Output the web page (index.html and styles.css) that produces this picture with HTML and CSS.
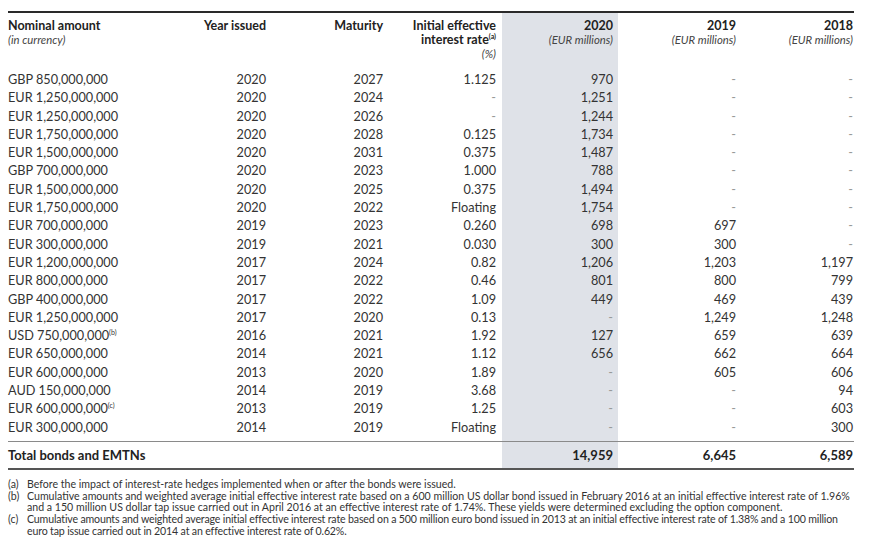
FILE: index.html
```html
<!DOCTYPE html>
<html>
<head>
<meta charset="utf-8">
<link rel="stylesheet" href="styles.css">
</head>
<body>
<div class="page">
<table class="bonds">
<colgroup>
<col class="c1"><col class="c2"><col class="c3"><col class="c4"><col class="c5"><col class="c6"><col class="c7">
</colgroup>
<thead>
<tr>
<th class="left"><b>Nominal amount</b><br><i>(in currency)</i></th>
<th><b>Year issued</b></th>
<th><b>Maturity</b></th>
<th><b>Initial effective<br>interest rate<sup>(a)</sup></b><br><i>(%)</i></th>
<th class="shade"><b>2020</b><br><i>(EUR millions)</i></th>
<th><b>2019</b><br><i>(EUR millions)</i></th>
<th><b>2018</b><br><i>(EUR millions)</i></th>
</tr>
</thead>
<tbody>
<tr><td class="left">GBP 850,000,000</td><td>2020</td><td>2027</td><td>1.125</td><td class="shade">970</td><td class="dash">-</td><td class="dash">-</td></tr>
<tr><td class="left">EUR 1,250,000,000</td><td>2020</td><td>2024</td><td class="dash">-</td><td class="shade">1,251</td><td class="dash">-</td><td class="dash">-</td></tr>
<tr><td class="left">EUR 1,250,000,000</td><td>2020</td><td>2026</td><td class="dash">-</td><td class="shade">1,244</td><td class="dash">-</td><td class="dash">-</td></tr>
<tr><td class="left">EUR 1,750,000,000</td><td>2020</td><td>2028</td><td>0.125</td><td class="shade">1,734</td><td class="dash">-</td><td class="dash">-</td></tr>
<tr><td class="left">EUR 1,500,000,000</td><td>2020</td><td>2031</td><td>0.375</td><td class="shade">1,487</td><td class="dash">-</td><td class="dash">-</td></tr>
<tr><td class="left">GBP 700,000,000</td><td>2020</td><td>2023</td><td>1.000</td><td class="shade">788</td><td class="dash">-</td><td class="dash">-</td></tr>
<tr><td class="left">EUR 1,500,000,000</td><td>2020</td><td>2025</td><td>0.375</td><td class="shade">1,494</td><td class="dash">-</td><td class="dash">-</td></tr>
<tr><td class="left">EUR 1,750,000,000</td><td>2020</td><td>2022</td><td>Floating</td><td class="shade">1,754</td><td class="dash">-</td><td class="dash">-</td></tr>
<tr><td class="left">EUR 700,000,000</td><td>2019</td><td>2023</td><td>0.260</td><td class="shade">698</td><td>697</td><td class="dash">-</td></tr>
<tr><td class="left">EUR 300,000,000</td><td>2019</td><td>2021</td><td>0.030</td><td class="shade">300</td><td>300</td><td class="dash">-</td></tr>
<tr><td class="left">EUR 1,200,000,000</td><td>2017</td><td>2024</td><td>0.82</td><td class="shade">1,206</td><td>1,203</td><td>1,197</td></tr>
<tr><td class="left">EUR 800,000,000</td><td>2017</td><td>2022</td><td>0.46</td><td class="shade">801</td><td>800</td><td>799</td></tr>
<tr><td class="left">GBP 400,000,000</td><td>2017</td><td>2022</td><td>1.09</td><td class="shade">449</td><td>469</td><td>439</td></tr>
<tr><td class="left">EUR 1,250,000,000</td><td>2017</td><td>2020</td><td>0.13</td><td class="shade dash">-</td><td>1,249</td><td>1,248</td></tr>
<tr><td class="left">USD 750,000,000<sup>(b)</sup></td><td>2016</td><td>2021</td><td>1.92</td><td class="shade">127</td><td>659</td><td>639</td></tr>
<tr><td class="left">EUR 650,000,000</td><td>2014</td><td>2021</td><td>1.12</td><td class="shade">656</td><td>662</td><td>664</td></tr>
<tr><td class="left">EUR 600,000,000</td><td>2013</td><td>2020</td><td>1.89</td><td class="shade dash">-</td><td>605</td><td>606</td></tr>
<tr><td class="left">AUD 150,000,000</td><td>2014</td><td>2019</td><td>3.68</td><td class="shade dash">-</td><td class="dash">-</td><td>94</td></tr>
<tr><td class="left">EUR 600,000,000<sup>(c)</sup></td><td>2013</td><td>2019</td><td>1.25</td><td class="shade dash">-</td><td class="dash">-</td><td>603</td></tr>
<tr class="last"><td class="left">EUR 300,000,000</td><td>2014</td><td>2019</td><td>Floating</td><td class="shade dash">-</td><td class="dash">-</td><td>300</td></tr>
</tbody>
<tfoot>
<tr><td class="left">Total bonds and EMTNs</td><td></td><td></td><td></td><td class="shade">14,959</td><td>6,645</td><td>6,589</td></tr>
</tfoot>
</table>
<ol class="notes">
<li><span class="lbl">(a)</span><span class="txt">Before the impact of interest-rate hedges implemented when or after the bonds were issued.</span></li>
<li><span class="lbl">(b)</span><span class="txt">Cumulative amounts and weighted average initial effective interest rate based on a 600 million US dollar bond issued in February 2016 at an initial effective interest rate of 1.96% and a 150 million US dollar tap issue carried out in April 2016 at an effective interest rate of 1.74%. These yields were determined excluding the option component.</span></li>
<li><span class="lbl">(c)</span><span class="txt tight">Cumulative amounts and weighted average initial effective interest rate based on a 500 million euro bond issued in 2013 at an initial effective interest rate of 1.38% and a 100 million euro tap issue carried out in 2014 at an effective interest rate of 0.62%.</span></li>
</ol>
</div>
</body>
</html>
```

FILE: styles.css
```css
html, body {
  margin: 0;
  padding: 0;
  background: #fff;
}
.page {
  padding: 11px 0 0 8px;
  width: 846px;
  font-family: Lato, "Open Sans", sans-serif;
  color: #333;
}
.bonds {
  width: 846px;
  border-collapse: collapse;
  table-layout: fixed;
  border-top: 2px solid #2a2a2a;
}
.c1 { width: 192px; }
.c2 { width: 70px; }
.c3 { width: 117px; }
.c4 { width: 115px; }
.c5 { width: 116px; }
.c6 { width: 122px; }
.c7 { width: 114px; }

.bonds th, .bonds td {
  text-align: right;
  padding: 0 4px 0 0;
  white-space: nowrap;
}
.bonds th:nth-child(4), .bonds td:nth-child(4) { padding-right: 6px; }
.bonds th:nth-child(5), .bonds td:nth-child(5) { padding-right: 5px; }
.bonds th:nth-child(7), .bonds td:nth-child(7) { padding-right: 1px; }
.bonds .left { text-align: left; }

.bonds th {
  vertical-align: top;
  font-size: 12.5px;
  line-height: 14px;
  padding-top: 6px;
  padding-bottom: 9px;
  font-weight: normal;
}
.bonds th b {
  font-weight: 700;
  color: #222;
}
.bonds th i {
  font-size: 11.3px;
  color: #444;
}
sup {
  font-size: 7px;
  line-height: 0;
  vertical-align: 5px;
}
.bonds tbody td {
  font-size: 12.7px;
  line-height: 18.3px;
  height: 18.3px;
}
.bonds tbody tr.last td {
  padding-bottom: 5px;
  border-bottom: 1px solid #8a8a8a;
}
.bonds .dash {
  color: #999;
}
.bonds .shade {
  background: #dfe2e8;
}
.bonds tfoot td {
  font-size: 13px;
  font-weight: 700;
  color: #222;
  height: 26px;
  line-height: 26px;
  border-bottom: 2px solid #555;
}
.notes {
  list-style: none;
  margin: 9px 0 0 0;
  padding: 0;
  font-size: 10.6px;
  line-height: 11.7px;
  color: #333;
}
.notes li {
  display: flex;
}
.notes .lbl {
  width: 19px;
  flex: none;
}
.notes .txt {
  flex: 1;
}
.notes .tight {
  letter-spacing: -0.16px;
}
```
